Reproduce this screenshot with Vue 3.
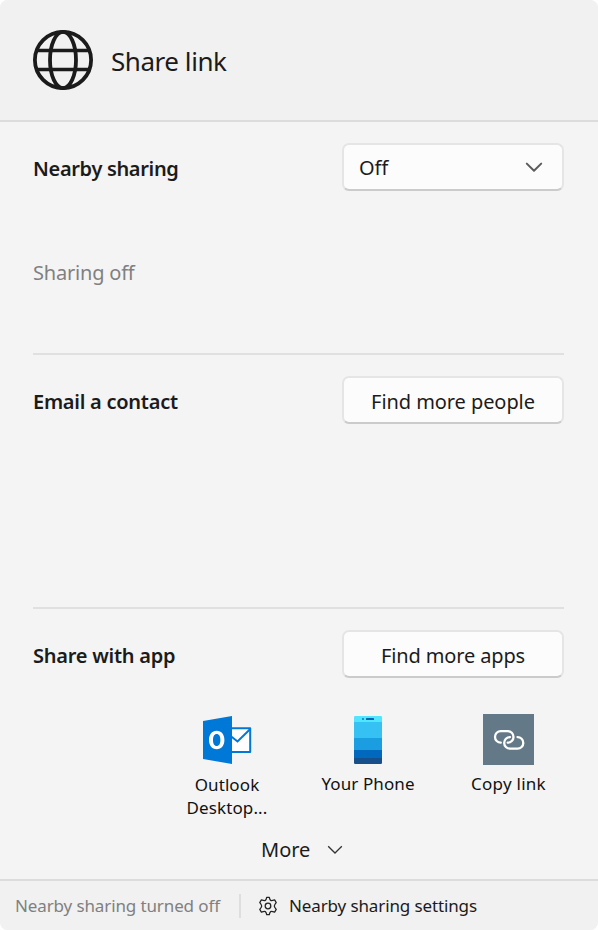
<script setup>
const apps = [
  { id: 'outlook', lines: ['Outlook', 'Desktop...'] },
  { id: 'phone', lines: ['Your Phone'] },
  { id: 'copy', lines: ['Copy link'] },
]
</script>

<template>
  <div class="share">
    <header class="head">
      <svg class="globe" width="60" height="60" viewBox="0 0 60 60" fill="none" stroke="#1b1b1b" stroke-width="3.8">
        <circle cx="30" cy="30" r="28.1" />
        <ellipse cx="30" cy="30" rx="13" ry="28.1" />
        <path d="M4 20.500H56M4 39.500H56" stroke-width="3.600" />
      </svg>
      <h1 class="title">Share link</h1>
    </header>

    <main class="body">
      <section class="section nearby">
        <div class="row">
          <h2 class="label l-nearby">Nearby sharing</h2>
          <button class="btn select">
            <span class="t-off">Off</span>
            <svg width="18" height="11" viewBox="0 0 18 11" fill="none" stroke="#5c5c5c" stroke-width="2" stroke-linecap="round" stroke-linejoin="round">
              <path d="M1.8 1.6 9 8.8l7.200-7.200" />
            </svg>
          </button>
        </div>
        <p class="status">Sharing off</p>
      </section>

      <section class="section email">
        <div class="row">
          <h2 class="label l-email">Email a contact</h2>
          <button class="btn"><span class="t-people">Find more people</span></button>
        </div>
      </section>

      <section class="section withapp">
        <div class="row">
          <h2 class="label l-app">Share with app</h2>
          <button class="btn"><span class="t-apps">Find more apps</span></button>
        </div>
      </section>

      <ul class="apps">
        <li v-for="app in apps" :key="app.id" class="app" :class="app.id">
          <svg v-if="app.id === 'outlook'" width="51" height="51" viewBox="-1 0 51 51">
            <path d="M27 14.200H48.200V38H27z" fill="#fff" stroke="#0078d7" stroke-width="2" stroke-linejoin="round" />
            <path d="M28 21.500 35.500 27.500 48.300 15" fill="none" stroke="#0078d7" stroke-width="2" />
            <path d="M1 7 30 2V50L1 45z" fill="#0078d7" />
            <path fill="#fff" fill-rule="evenodd" d="M14.700 16.700C19.500 16.700 22.400 20.500 22.400 26S19.500 35.300 14.700 35.300 7 31.500 7 26 9.900 16.700 14.700 16.700zM14.700 20C12.300 20 11 22.300 11 26S12.300 32 14.700 32 18.400 29.700 18.400 26 17.100 20 14.700 20z" />
          </svg>
          <svg v-else-if="app.id === 'phone'" width="51" height="51" viewBox="-0.500 0 51 51">
            <path d="M12.700 2H38.300Q39.500 2 39.500 3.200V8h-28V3.200Q11.500 2 12.700 2z" fill="#50e6ff" />
            <path d="M11.500 8h28v16h-28z" fill="#35c1f1" />
            <path d="M11.500 24h28v12h-28z" fill="#1b9de2" />
            <path d="M11.500 36h28v8h-28z" fill="#0069bd" />
            <path d="M11.500 44h28v4.800Q39.500 50 38.300 50H12.700Q11.500 50 11.500 48.800z" fill="#174f8b" />
            <rect x="23.500" y="4" width="8" height="2" rx=".6" fill="#0665b4" />
            <rect x="19.500" y="4" width="2" height="2" rx=".7" fill="#1683ca" />
          </svg>
          <svg v-else width="51" height="51" viewBox="0 0 51 51">
            <path d="M0 0h51v51H0z" fill="#647987" />
            <g fill="none" stroke="#fff" stroke-width="2.300" stroke-linecap="round">
              <path d="M17.800 28.700A5.800 5.800 0 0 1 17.800 17.100H24.700A5.800 5.800 0 0 1 24.700 28.700" />
              <path d="M27 23.100A5.800 5.800 0 0 0 27 34.700H34.500A5.800 5.800 0 0 0 34.500 23.100" />
            </g>
          </svg>
          <p class="name"><span v-for="line in app.lines" :key="line">{{ line }}</span></p>
        </li>
      </ul>

      <button class="more">
        <span class="t-more">More</span>
        <svg width="16" height="10" viewBox="0 0 16 10" fill="none" stroke="#333" stroke-width="1.300">
          <path d="M1.200 1.300 8 8l6.800-6.700" />
        </svg>
      </button>
    </main>

    <footer class="foot">
      <span class="state">Nearby sharing turned off</span>
      <i class="bar"></i>
      <svg class="gear" width="20" height="20" viewBox="0 0 20 20" fill="none" stroke="#222" stroke-width="1.300" stroke-linejoin="round">
        <path d="M8.700 1.400H11.300Q11.800 3.900 12.700 4.400T16.600 3.800L18.200 6.600Q16.300 8.900 16.300 10T18.200 13.400L16.600 16.200Q13.600 15.100 12.700 15.600T11.300 18.600H8.700Q8.200 16.100 7.300 15.600T3.400 16.200L1.800 13.400Q3.700 11.100 3.700 10T1.800 6.600L3.400 3.800Q6.400 4.900 7.300 4.400T8.700 1.400z" />
        <circle cx="10" cy="10" r="2.800" />
      </svg>
      <span class="settings">Nearby sharing settings</span>
    </footer>
  </div>
</template>

<style>
body {
  background: #fff;
}
</style>

<style scoped>
.share {
  width: 598px;
  height: 930px;
  display: flex;
  flex-direction: column;
  overflow: hidden;
  border-radius: 8px;
  background: #f4f4f4;
  color: #1b1b1b;
  font-family: "Noto Sans", "Open Sans", sans-serif;
  font-size: 20px;
  white-space: nowrap;
}
.share * {
  box-sizing: border-box;
}
h1, h2, p, ul {
  margin: 0;
  padding: 0;
  font-weight: 400;
}
button {
  font: inherit;
  color: inherit;
}
.head {
  height: 122px;
  flex: none;
  display: flex;
  align-items: center;
  gap: 18px;
  padding: 0 33px;
  background: #f1f1f1;
  border-bottom: 2px solid #dcdcdc;
}
.title {
  font-size: 26px;
  line-height: 36px;
  padding-top: 2px;
  letter-spacing: -0.45px;
}
.body {
  flex: 1;
  display: flex;
  flex-direction: column;
  padding: 0 34px 0 33px;
}
.section {
  flex: none;
  padding-top: 21px;
}
.nearby {
  height: 233px;
  border-bottom: 2px solid #e0e0e0;
}
.email {
  height: 254px;
  border-bottom: 2px solid #e0e0e0;
}
.withapp {
  height: 69px;
}
.row {
  display: flex;
  justify-content: space-between;
  align-items: center;
}
.label {
  font-size: 20px;
  font-weight: 600;
  line-height: 28px;
  padding-top: 4px;
  letter-spacing: -0.25px;
}
.l-nearby {
  letter-spacing: -0.33px;
}
.btn {
  width: 222px;
  height: 48px;
  padding: 4px 15px 0;
  border: 2px solid #e5e5e5;
  border-bottom-color: #cbcbcb;
  border-radius: 7px;
  background: #fcfcfc;
  line-height: 28px;
}
.t-people {
  letter-spacing: -0.07px;
}
.t-apps {
  letter-spacing: -0.14px;
}
.select {
  display: flex;
  align-items: center;
  justify-content: space-between;
  padding-top: 1px;
  padding-right: 19px;
  padding-left: 15px;
}
.status {
  padding-top: 68px;
  line-height: 28px;
  letter-spacing: -0.2px;
  color: #808080;
}
.apps {
  flex: none;
  height: 142px;
  display: grid;
  grid-template-columns: 141px 141px 141px;
  justify-content: end;
  margin-right: -15px;
  padding-top: 36px;
  list-style: none;
}
.app {
  display: flex;
  flex-direction: column;
  align-items: center;
}
.name {
  padding-top: 7px;
  padding-left: 1px;
  display: flex;
  flex-direction: column;
  align-items: center;
  font-size: 17px;
  line-height: 23px;
  letter-spacing: 0.1px;
  color: #111;
}
.outlook .name {
  padding-top: 8px;
}
.copy .name {
  padding-left: 0;
  letter-spacing: 0.25px;
}
.more {
  align-self: flex-start;
  margin: 16px 0 0 228px;
  padding: 0;
  display: flex;
  align-items: center;
  gap: 17px;
  border: 0;
  background: none;
  line-height: 28px;
}
.foot {
  height: 51px;
  flex: none;
  display: flex;
  align-items: center;
  padding-left: 15px;
  background: #f1f1f1;
  border-top: 2px solid #dcdcdc;
  font-size: 17px;
  line-height: 24px;
  letter-spacing: -0.12px;
}
.state {
  width: 224px;
  color: #808080;
}
.bar {
  width: 2px;
  height: 24px;
  margin-right: 17px;
  background: #dedede;
}
.gear {
  margin-right: 11px;
}
</style>
